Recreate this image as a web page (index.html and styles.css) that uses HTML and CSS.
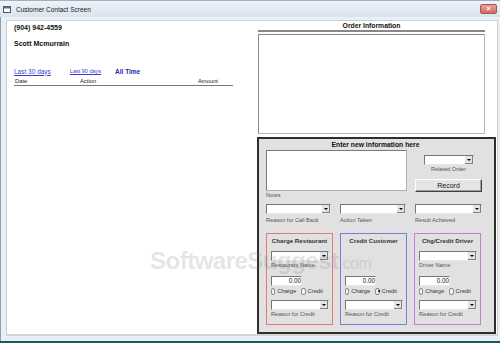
FILE: index.html
```html
<!DOCTYPE html>
<html lang="en">
<head>
    <meta charset="UTF-8">
    <title>Customer Contact Screen</title>
    <link rel="stylesheet" href="styles.css">
</head>
<body>
    <div class="window">
        <div class="titlebar">
            <svg class="app-icon" width="8" height="8" viewBox="0 0 8 8">
                <rect x="0.5" y="1.5" width="7" height="6" fill="#fff" stroke="#555"/>
                <rect x="0.5" y="1.5" width="7" height="2" fill="#4a6fa5"/>
            </svg>
            <span class="win-title">Customer Contact Screen</span>
            <span class="close-btn">&#215;</span>
        </div>
        <div class="frame">
            <div class="client">
                <div class="history">
                    <div class="phone">(904) 942-4559</div>
                    <div class="name">Scott Mcmurrain</div>
                    <div class="ranges">
                        <a class="range">Last 30 days</a>
                        <a class="range narrow">Last 90 days</a>
                        <span class="range all">All Time</span>
                    </div>
                    <div class="cols">
                        <span class="col-date">Date</span>
                        <span class="col-action">Action</span>
                        <span class="col-amount">Amount</span>
                    </div>
                </div>

                <div class="side">
                    <div class="order-head">Order Information</div>
                    <div class="order-box"></div>

                    <div class="entry">
                        <div class="entry-head">Enter new information here</div>
                        <div class="entry-top">
                            <div class="notes-wrap">
                                <div class="notes"></div>
                                <div class="lbl">Notes</div>
                            </div>
                            <div class="related">
                                <div class="combo small"><span class="arrow"></span></div>
                                <div class="lbl center">Related Order</div>
                                <div class="record">Record</div>
                            </div>
                        </div>

                        <div class="entry-row">
                            <div>
                                <div class="combo"><span class="arrow"></span></div>
                                <div class="lbl">Reason for Call Back</div>
                            </div>
                            <div>
                                <div class="combo"><span class="arrow"></span></div>
                                <div class="lbl">Action Taken</div>
                            </div>
                            <div>
                                <div class="combo"><span class="arrow"></span></div>
                                <div class="lbl">Result Achieved</div>
                            </div>
                        </div>

                        <div class="groups">
                            <div class="group red">
                                <div class="group-title">Charge Restaurant</div>
                                <div class="combo g"><span class="arrow"></span></div>
                                <div class="lbl">Restaurant Name</div>
                                <div class="amount">0.00</div>
                                <div class="radios">
                                    <span class="radio"></span><span class="rlbl">Charge</span>
                                    <span class="radio"></span><span class="rlbl">Credit</span>
                                </div>
                                <div class="combo g"><span class="arrow"></span></div>
                                <div class="lbl">Reason for Credit</div>
                            </div>
                            <div class="group blue">
                                <div class="group-title">Credit Customer</div>
                                <div class="spacer"></div>
                                <div class="amount">0.00</div>
                                <div class="radios">
                                    <span class="radio"></span><span class="rlbl">Charge</span>
                                    <span class="radio on"></span><span class="rlbl">Credit</span>
                                </div>
                                <div class="combo g"><span class="arrow"></span></div>
                                <div class="lbl">Reason for Credit</div>
                            </div>
                            <div class="group purple">
                                <div class="group-title">Chg/Credit Driver</div>
                                <div class="combo g"><span class="arrow"></span></div>
                                <div class="lbl">Driver Name</div>
                                <div class="amount">0.00</div>
                                <div class="radios">
                                    <span class="radio"></span><span class="rlbl">Charge</span>
                                    <span class="radio"></span><span class="rlbl">Credit</span>
                                </div>
                                <div class="combo g"><span class="arrow"></span></div>
                                <div class="lbl">Reason for Credit</div>
                            </div>
                        </div>
                    </div>
                </div>
            </div>
        </div>
        <div class="bottom-edge"></div>
    </div>

    <div class="watermark">SoftwareSuggest<span class="dotcom">.com</span></div>
</body>
</html>
```

FILE: styles.css
```css
body {
    margin: 0;
    padding: 0;
    width: 500px;
    height: 343px;
    overflow: hidden;
    font-family: "Liberation Sans", Arial, sans-serif;
    color: #111;
    background-color: #dbe6f0;
}

.window {
    width: 500px;
    height: 343px;
    display: flex;
    flex-direction: column;
}

.titlebar {
    height: 17px;
    display: flex;
    align-items: center;
    padding: 0 3px;
    background: linear-gradient(#eef3f8, #d9e4ee);
    border-top: 1px solid #9fb2c4;
    box-sizing: border-box;
}

.app-icon {
    margin-right: 5px;
}

.win-title {
    font-size: 6.5px;
    color: #222;
    flex: 1;
}

.close-btn {
    width: 15px;
    height: 8px;
    line-height: 8px;
    text-align: center;
    color: #fff;
    font-size: 8px;
    font-weight: bold;
    background: linear-gradient(#e8a39a, #cf6a5f);
    border: 1px solid #a7574f;
    border-radius: 2px;
}

.frame {
    flex: 1;
    padding: 3px 2px 5px 5px;
    background-color: #e8eff6;
    border-left: 1px solid #8ba0b3;
    display: flex;
}

.client {
    flex: 1;
    background-color: #fff;
    border: 1px solid #cfcfcf;
    border-bottom: 2px solid #d4d4d4;
    display: flex;
}

.bottom-edge {
    height: 2px;
    background-color: #1d5466;
}

/* left column */
.history {
    width: 219px;
    padding: 2px 0 0 7px;
}

.phone, .name {
    font-size: 7px;
    font-weight: bold;
    line-height: 10px;
    color: #111;
}

.name {
    margin-top: 6px;
}

.ranges {
    margin-top: 17px;
    display: flex;
    align-items: center;
    height: 10px;
    font-size: 6.5px;
}

.range {
    color: #3a3ad0;
    text-decoration: underline;
    margin-right: 19px;
}

.range.narrow {
    font-size: 5.5px;
    margin-right: 14px;
}

.range.all {
    font-weight: bold;
    text-decoration: none;
    color: #2323b8;
}

.cols {
    margin-top: 1px;
    display: flex;
    font-size: 5.8px;
    line-height: 8px;
    border-bottom: 1px solid #777;
    color: #222;
}

.col-date { width: 65px; padding-left: 1px; }
.col-action { flex: 1; }
.col-amount { width: 35px; }

/* right column */
.side {
    margin-left: 24px;
    width: 239px;
    display: flex;
    flex-direction: column;
}

.order-head {
    width: 227px;
    margin-left: 1px;
    text-align: center;
    font-size: 6.8px;
    font-weight: bold;
    line-height: 9px;
    border-bottom: 2px solid #888;
}

.order-box {
    width: 225px;
    height: 98px;
    margin: 2px 0 3px 1px;
    border: 1px solid #b8b8b8;
    border-top-color: #8a8a8a;
    border-left-color: #8a8a8a;
}

.entry {
    height: 193px;
    background-color: #e1e1e1;
    border: 2px solid #2e2e2e;
    padding: 0 0 0 7px;
}

.entry-head {
    text-align: center;
    font-size: 6.8px;
    font-weight: bold;
    line-height: 11px;
    padding-right: 9px;
}

.entry-top {
    display: flex;
    gap: 8px;
}

.notes {
    width: 139px;
    height: 39px;
    background-color: #fff;
    border: 1px solid #b0b0b0;
    border-top-color: #7a7a7a;
    border-left-color: #7a7a7a;
}

.related {
    width: 67px;
    display: flex;
    flex-direction: column;
    align-items: center;
}

.lbl {
    font-size: 5.6px;
    line-height: 8px;
    color: #555;
    white-space: nowrap;
}

.lbl.center {
    text-align: center;
}

.combo {
    position: relative;
    height: 8px;
    background-color: #fff;
    border: 1px solid #e8e8e8;
    border-top-color: #777;
    border-left-color: #777;
}

.combo.small {
    width: 48px;
    margin-top: 5px;
}

.arrow {
    position: absolute;
    right: 0;
    top: 0;
    width: 8px;
    height: 8px;
    background-color: #e4e4e4;
    border-left: 1px solid #fff;
    box-shadow: inset -1px -1px 0 #808080;
}

.arrow::after {
    content: "";
    position: absolute;
    left: 2px;
    top: 3px;
    border-left: 2px solid transparent;
    border-right: 2px solid transparent;
    border-top: 2px solid #000;
}

.record {
    margin-top: 6px;
    width: 65px;
    height: 11px;
    line-height: 11px;
    text-align: center;
    font-size: 7px;
    background-color: #e4e4e4;
    border: 1px solid #fff;
    border-right-color: #404040;
    border-bottom-color: #404040;
    box-shadow: inset -1px -1px 0 #a0a0a0;
}

.entry-row {
    margin-top: 5px;
    display: grid;
    grid-template-columns: 65px 66px 67px;
    gap: 9px;
}

.entry-row .lbl {
    margin-top: 2px;
}

.groups {
    margin-top: 9px;
    display: grid;
    grid-template-columns: 67px 67px 67px;
    gap: 8px 7px;
}

.group {
    height: 90px;
    border: 1px solid;
    padding: 0 4px;
}

.group.red { border-color: #e37a7a; }
.group.blue { border-color: #7a7ae0; }
.group.purple { border-color: #c97bd8; }

.group-title {
    margin-top: 2px;
    text-align: center;
    font-size: 6.2px;
    font-weight: bold;
    line-height: 10px;
    color: #333;
}

.combo.g {
    margin-top: 5px;
    width: 56px;
}

.spacer {
    height: 23px;
}

.amount {
    margin-top: 7px;
    width: 29px;
    height: 8px;
    line-height: 8px;
    text-align: right;
    padding-right: 0;
    font-size: 6.3px;
    background-color: #fff;
    border: 1px solid #e8e8e8;
    border-top-color: #777;
    border-left-color: #777;
}

.group .lbl {
    margin-top: 0;
}

.amount + .radios {
    margin-top: 1px;
}

.radios {
    display: flex;
    align-items: center;
    height: 8px;
    font-size: 5.8px;
}

.radio {
    width: 5px;
    height: 5px;
    border-radius: 50%;
    background-color: #fff;
    border: 1px solid #888;
    margin-right: 2px;
    position: relative;
}

.radio.on::after {
    content: "";
    position: absolute;
    left: 1.5px;
    top: 1.5px;
    width: 2px;
    height: 2px;
    border-radius: 50%;
    background-color: #000;
}

.rlbl {
    margin-right: 5px;
    color: #333;
}

.radios + .combo.g {
    margin-top: 5px;
}

.watermark {
    position: absolute;
    left: 150px;
    top: 247px;
    font-size: 24px;
    font-weight: bold;
    letter-spacing: -0.5px;
    color: rgba(120, 120, 120, 0.2);
    pointer-events: none;
    white-space: nowrap;
}

.dotcom {
    font-size: 16px;
    font-weight: normal;
}
```
